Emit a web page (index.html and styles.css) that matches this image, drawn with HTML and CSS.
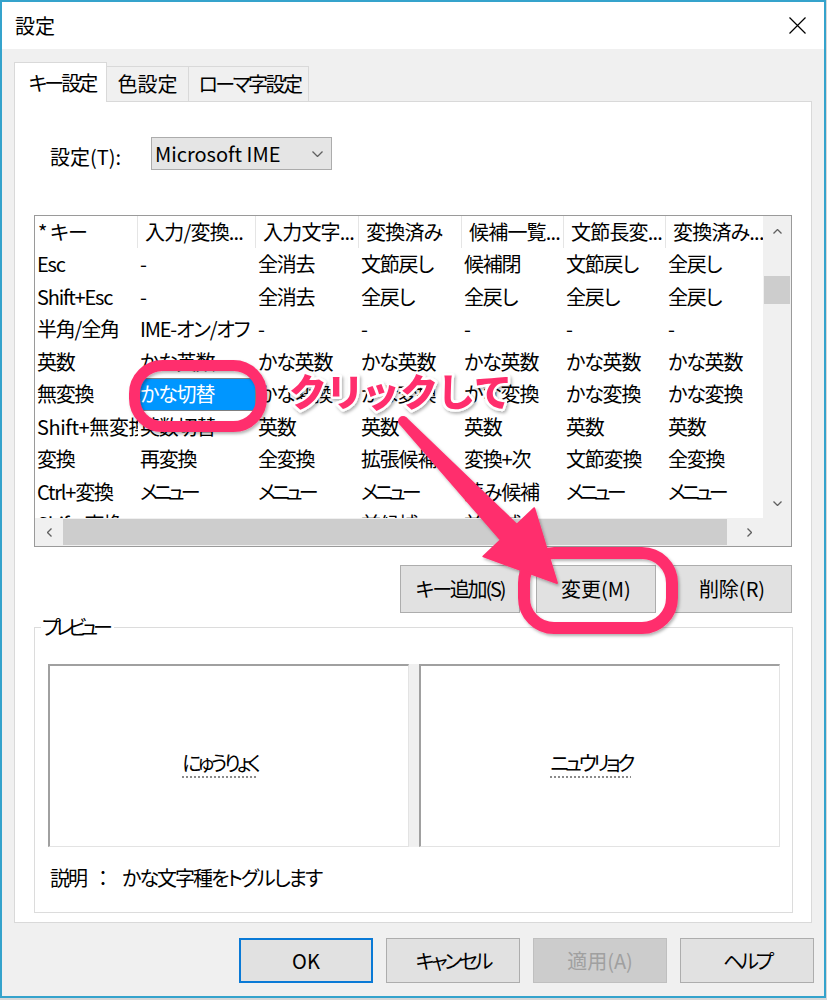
FILE: index.html
```html
<!DOCTYPE html>
<html lang="ja">
<head>
<meta charset="utf-8">
<title>設定</title>
<link rel="stylesheet" href="styles.css">
</head>
<body>
<div class="window">
  <div class="titlebar">
    <span class="title">設定</span>
    <svg class="close" viewBox="0 0 17 17"><path d="M0.5 0.5L16.5 16.5M16.5 0.5L0.5 16.5"/></svg>
  </div>
  <div class="tabs">
    <div class="tab active">キー設定</div>
    <div class="tab t2">色設定</div>
    <div class="tab t3">ローマ字設定</div>
  </div>
  <div class="panel">
    <div class="setting-row">
      <span class="label">設定(T):</span>
      <div class="combo"><span>Microsoft IME</span><svg class="chev" viewBox="0 0 11 6"><polyline points="0.5,0.5 5.5,5.5 10.5,0.5"/></svg></div>
    </div>
    <div class="list">
      <div class="list-top">
        <div class="grid">
          <div class="hdr">
            <div>* キー</div><div>入力/変換...</div><div>入力文字...</div><div>変換済み</div><div>候補一覧...</div><div>文節長変...</div><div>変換済み...</div>
          </div>
          <div class="row"><div>Esc</div><div>-</div><div>全消去</div><div>文節戻し</div><div>候補閉</div><div>文節戻し</div><div>全戻し</div></div>
          <div class="row"><div>Shift+Esc</div><div>-</div><div>全消去</div><div>全戻し</div><div>全戻し</div><div>全戻し</div><div>全戻し</div></div>
          <div class="row"><div>半角/全角</div><div>IME-オン/オフ</div><div>-</div><div>-</div><div>-</div><div>-</div><div>-</div></div>
          <div class="row"><div>英数</div><div>かな英数</div><div>かな英数</div><div>かな英数</div><div>かな英数</div><div>かな英数</div><div>かな英数</div></div>
          <div class="row"><div>無変換</div><div class="sel">かな切替</div><div>かな変換</div><div>かな変換</div><div>かな変換</div><div>かな変換</div><div>かな変換</div></div>
          <div class="row"><div class="wide">Shift+無変換</div><div>英数切替</div><div>英数</div><div>英数</div><div>英数</div><div>英数</div><div>英数</div></div>
          <div class="row"><div>変換</div><div>再変換</div><div>全変換</div><div>拡張候補</div><div>変換+次</div><div>文節変換</div><div>全変換</div></div>
          <div class="row"><div>Ctrl+変換</div><div class="k">メニュー</div><div class="k">メニュー</div><div class="k">メニュー</div><div>読み候補</div><div class="k">メニュー</div><div class="k">メニュー</div></div>
          <div class="row"><div>Shift+変換</div><div></div><div></div><div>前候補</div><div>前候補</div><div></div><div></div></div>
        </div>
        <div class="vscroll">
          <div class="sb-btn"><svg class="arr-v" viewBox="0 0 9 5"><polyline points="0.5,4.5 4.5,0.5 8.5,4.5"/></svg></div>
          <div class="vtrack"><div class="vthumb"></div></div>
          <div class="sb-btn"><svg class="arr-v" viewBox="0 0 9 5"><polyline points="0.5,0.5 4.5,4.5 8.5,0.5"/></svg></div>
        </div>
      </div>
      <div class="hscroll">
        <div class="hbtn"><svg class="arr-h" viewBox="0 0 5 9"><polyline points="4.5,0.5 0.5,4.5 4.5,8.5"/></svg></div>
        <div class="htrack"><div class="hthumb"></div></div>
        <div class="hbtn"><svg class="arr-h" viewBox="0 0 5 9"><polyline points="0.5,0.5 4.5,4.5 0.5,8.5"/></svg></div>
        <div class="corner"></div>
      </div>
    </div>
    <div class="btn-row">
      <div class="btn b-add">キー追加(S)</div>
      <div class="btn">変更(M)</div>
      <div class="btn">削除(R)</div>
    </div>
    <div class="group">
      <span class="legend">プレビュー</span>
      <div class="panes">
        <div class="pane"><span class="ul">にゅうりょく</span></div>
        <div class="split"></div>
        <div class="pane"><span class="ul">ニュウリョク</span></div>
      </div>
      <div class="desc">説明<span class="np">：</span>かな文字種をトグルします</div>
    </div>
  </div>
  <div class="dlg-btns">
    <div class="btn dbtn default">OK</div>
    <div class="btn dbtn b-kana">キャンセル</div>
    <div class="btn dbtn disabled">適用(A)</div>
    <div class="btn dbtn b-kana">ヘルプ</div>
  </div>
</div>
<svg class="annot" viewBox="0 0 827 1000" width="827" height="1000">
  <defs>
    <filter id="sh" x="-20%" y="-20%" width="140%" height="140%">
      <feDropShadow dx="1.5" dy="2" stdDeviation="1.5" flood-color="#000" flood-opacity="0.3"/>
    </filter>
  </defs>
  <g filter="url(#sh)">
    <rect class="ring" x="134.5" y="365.5" width="127" height="61" rx="28"/>
    <rect class="ring ring2" x="524" y="553" width="148" height="75" rx="30"/>
    <polygon class="arrow" points="405.9,418.3 516.8,524.7 534.2,508.2 557,583 483.4,556.4 500.8,539.9 400.1,423.7"/>
    <circle class="arrow" cx="403" cy="421" r="4"/>
    <text class="annot-text" x="290" y="406" textLength="219" lengthAdjust="spacing">クリックして</text>
  </g>
</svg>
</body>
</html>
```
FILE: styles.css
```css
* { box-sizing: border-box; }
html, body { margin: 0; padding: 0; }
body {
  width: 827px;
  height: 1000px;
  position: relative;
  overflow: hidden;
  background: #d8d8d8;
  font-family: "Noto Sans CJK JP", "Noto Sans", sans-serif;
  font-size: 20px;
  color: #000;
  font-feature-settings: "palt";
}
.window {
  width: 826px;
  height: 998px;
  border: 2px solid #35a3cc;
  background: #f0f0f0;
  display: flex;
  flex-direction: column;
}
.titlebar {
  height: 47px;
  flex: none;
  background: #fff;
  display: flex;
  align-items: center;
  justify-content: space-between;
  padding: 0 18px 0 13px;
}
.title { line-height: 1; }
.close { width: 17px; height: 17px; }
.close path { stroke: #000; stroke-width: 1.2; fill: none; }

.tabs {
  display: flex;
  align-items: flex-end;
  height: 39px;
  flex: none;
  margin: 13px 0 0 12px;
  position: relative;
  z-index: 1;
}
.tab {
  height: 35px;
  border: 1px solid #d9d9d9;
  border-left: none;
  border-bottom: none;
  background: #f0f0f0;
  display: flex;
  align-items: center;
  justify-content: center;
  line-height: 1;
}
.tab.active {
  width: 93px;
  height: 40px;
  margin-bottom: -1px;
  background: #fff;
  border-left: 1px solid #d9d9d9;
  padding-top: 1px;
  letter-spacing: -3px;
  text-indent: 3px;
}
.tab.t2 { width: 82px; }
.tab.t3 { width: 120px; letter-spacing: -2.5px; text-indent: 2px; }

.panel {
  width: 798px;
  height: 822px;
  flex: none;
  margin-left: 12px;
  background: #fff;
  border: 1px solid #d9d9d9;
  display: flex;
  flex-direction: column;
}
.setting-row {
  display: flex;
  align-items: center;
  height: 33px;
  margin-top: 35px;
  padding-left: 35px;
}
.label { width: 101px; margin-top: 6px; line-height: 1; }
.combo {
  width: 181px;
  height: 33px;
  background: #e5e5e5;
  border: 1px solid #acacac;
  display: flex;
  align-items: center;
  justify-content: space-between;
  padding: 0 8px 0 3px;
  line-height: 1;
}
.chev { width: 11px; height: 6px; }
.chev polyline, .arr-v polyline, .arr-h polyline { fill: none; stroke: #606060; stroke-width: 1.3; }

.list {
  margin: 45px 0 0 19px;
  width: 758px;
  height: 332px;
  border: 1px solid #9a9a9a;
  display: flex;
  flex-direction: column;
}
.list-top { display: flex; height: 302px; }
.grid { width: 728px; height: 302px; overflow: hidden; background: #fff; }
.hdr, .row {
  display: grid;
  grid-template-columns: 103px 118px 103px 103px 102px 102px 110px;
}
.hdr { height: 32px; }
.row { height: 32.5px; }
.hdr > div, .row > div {
  display: flex;
  align-items: center;
  white-space: nowrap;
  overflow: hidden;
  line-height: 1;
}
.hdr > div { padding-left: 7px; border-right: 1px solid #e5e5e5; letter-spacing: -0.8px; }
.hdr > div:first-child { padding-left: 3px; }
.row > div { padding-left: 2px; letter-spacing: -1.2px; }
.row > div.wide { letter-spacing: -0.4px; }
.row > div.k { letter-spacing: -4px; }
.row > div.sel {
  background: #0096ff;
  color: #fff;
  border: 1px solid #7f7f7f;
  padding-left: 1px;
}
.vscroll { width: 28px; background: #f0f0f0; display: flex; flex-direction: column; }
.sb-btn { height: 30px; display: flex; align-items: center; justify-content: center; }
.arr-v { width: 9px; height: 5px; }
.arr-h { width: 5px; height: 9px; }
.vtrack { flex: 1; padding: 30px 1px 0; }
.vthumb { height: 28px; background: #cdcdcd; }
.hscroll { height: 28px; display: flex; background: #f0f0f0; }
.hbtn { width: 28px; display: flex; align-items: center; justify-content: center; }
.htrack { width: 672px; padding: 1px 0; }
.hthumb { width: 664px; height: 26px; background: #cdcdcd; }
.corner { width: 28px; background: #f0f0f0; }

.btn-row {
  display: flex;
  justify-content: flex-end;
  gap: 16px;
  margin-top: 18px;
  padding-right: 19px;
}
.btn {
  width: 120px;
  height: 48px;
  background: #e1e1e1;
  border: 1px solid #adadad;
  display: flex;
  align-items: center;
  justify-content: center;
  line-height: 1;
}
.b-add { letter-spacing: -2.2px; }

.group {
  position: relative;
  margin: 14px 0 0 19px;
  width: 759px;
  height: 286px;
  border: 1px solid #dcdcdc;
}
.legend {
  position: absolute;
  left: 6px;
  top: -15px;
  background: #fff;
  padding: 0 6px 0 1px;
  line-height: 28px;
  letter-spacing: -5px;
}
.panes { display: flex; margin-top: 36px; padding-left: 13px; height: 183px; }
.pane {
  width: 361px;
  height: 183px;
  background: #fff;
  border-top: 2px solid #a0a0a0;
  border-left: 2px solid #a0a0a0;
  border-right: 1px solid #e3e3e3;
  border-bottom: 1px solid #e3e3e3;
  display: flex;
  align-items: center;
  justify-content: center;
  padding: 14px 18px 0 0;
}
.split { width: 10px; background: #f0f0f0; }
.ul {
  line-height: 1;
  letter-spacing: -3.5px;
  text-decoration: underline dotted #8a8a8a;
  text-underline-offset: 5px;
}
.desc { margin-top: 16px; padding-left: 15px; line-height: 30px; letter-spacing: -2px; }
.np { font-feature-settings: normal; letter-spacing: 0; margin: 0 9px 0 7px; }

.dlg-btns {
  display: flex;
  justify-content: flex-end;
  gap: 13px;
  margin-top: 15px;
  padding-right: 10px;
}
.dbtn { width: 134px; height: 45px; }
.dbtn.b-kana { letter-spacing: -3.2px; }
.dbtn.default { border: 2px solid #0a7ad6; }
.dbtn.disabled { background: #cccccc; border-color: #bfbfbf; color: #a0a0a0; }

.annot {
  position: absolute;
  left: 0;
  top: 0;
  width: 827px;
  height: 1000px;
  pointer-events: none;
}
.ring { fill: none; stroke: #ff2f6d; stroke-width: 11; }
.ring2 { stroke-width: 12; }
.arrow { fill: #ff2f6d; stroke: #ff2f6d; stroke-width: 2; stroke-linejoin: round; }
.annot-text {
  font-family: "Noto Sans CJK JP", sans-serif;
  font-weight: 900;
  font-size: 38px;
  letter-spacing: 0;
  fill: #ff2f6d;
  stroke: #fff;
  stroke-width: 5px;
  stroke-linejoin: round;
  paint-order: stroke;
}
```
